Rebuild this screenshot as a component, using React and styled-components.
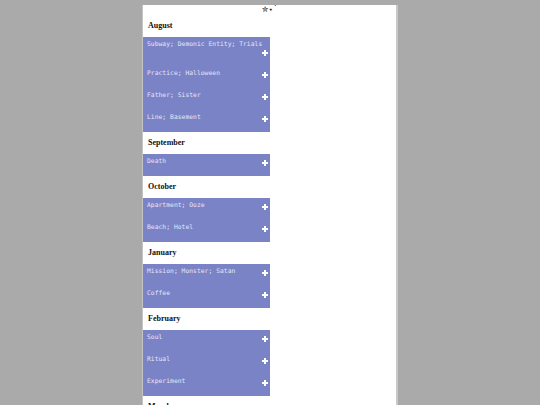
import React from 'react';
import styled, { createGlobalStyle } from 'styled-components';

const GlobalStyle = createGlobalStyle`
  html, body {
    margin: 0;
    padding: 0;
    background: #aaaaaa;
    height: 100%;
    overflow: hidden;
  }
`;

const Page = styled.div`
  width: 253px;
  margin: 5px auto 0 auto;
  background: #ffffff;
  border-left: 1px solid #c4c4c4;
  border-right: 2px solid #c8c8c8;
  min-height: 420px;
`;

const Stars = styled.div`
  height: 10px;
  line-height: 10px;
  text-align: center;
  font-family: "DejaVu Sans", sans-serif;
  font-size: 8px;
  color: #111;
`;

const MonthHeading = styled.h2`
  margin: 0;
  height: 22px;
  line-height: 22px;
  padding-left: 5px;
  font-family: "Liberation Serif", "Times New Roman", serif;
  font-size: 8px;
  font-weight: bold;
  color: #111;
`;

const Entries = styled.ul`
  list-style: none;
  margin: 0;
  padding: 0;
  width: 127px;
  background: #7b83c7;
`;

const Entry = styled.li`
  box-sizing: border-box;
  min-height: 22px;
  padding: 1px 2px 10px 4px;
  display: flex;
  flex-wrap: wrap;
  column-gap: 5px;
  justify-content: space-between;
`;

const Label = styled.span`
  line-height: 11px;
  font-family: "DejaVu Sans Mono", "Liberation Mono", monospace;
  font-size: 6.3px;
  letter-spacing: 0.05px;
  color: #e4e6f7;
  white-space: nowrap;
`;

const Plus = styled.svg`
  width: 6px;
  height: 6px;
  margin-top: 1px;
  margin-left: auto;
  align-self: flex-end;
`;

const PlusIcon = () => (
  <Plus viewBox="0 0 6 6">
    <path d="M2 0h2v2h2v2H4v2H2V4H0V2h2z" fill="#ffffff" />
  </Plus>
);

const months = [
  { name: 'August', items: ['Subway; Demonic Entity; Trials', 'Practice; Halloween', 'Father; Sister', 'Line; Basement'] },
  { name: 'September', items: ['Death'] },
  { name: 'October', items: ['Apartment; Ooze', 'Beach; Hotel'] },
  { name: 'January', items: ['Mission; Monster; Satan', 'Coffee'] },
  { name: 'February', items: ['Soul', 'Ritual', 'Experiment'] },
  { name: 'March', items: ['Prayer'] },
];

export default function App() {
  return (
    <>
      <GlobalStyle />
      <Page>
        <Stars>✮⋆˙</Stars>
        {months.map((m) => (
          <section key={m.name}>
            <MonthHeading>{m.name}</MonthHeading>
            <Entries>
              {m.items.map((item) => (
                <Entry key={item}>
                  <Label>{item}</Label>
                  <PlusIcon />
                </Entry>
              ))}
            </Entries>
          </section>
        ))}
      </Page>
    </>
  );
}
